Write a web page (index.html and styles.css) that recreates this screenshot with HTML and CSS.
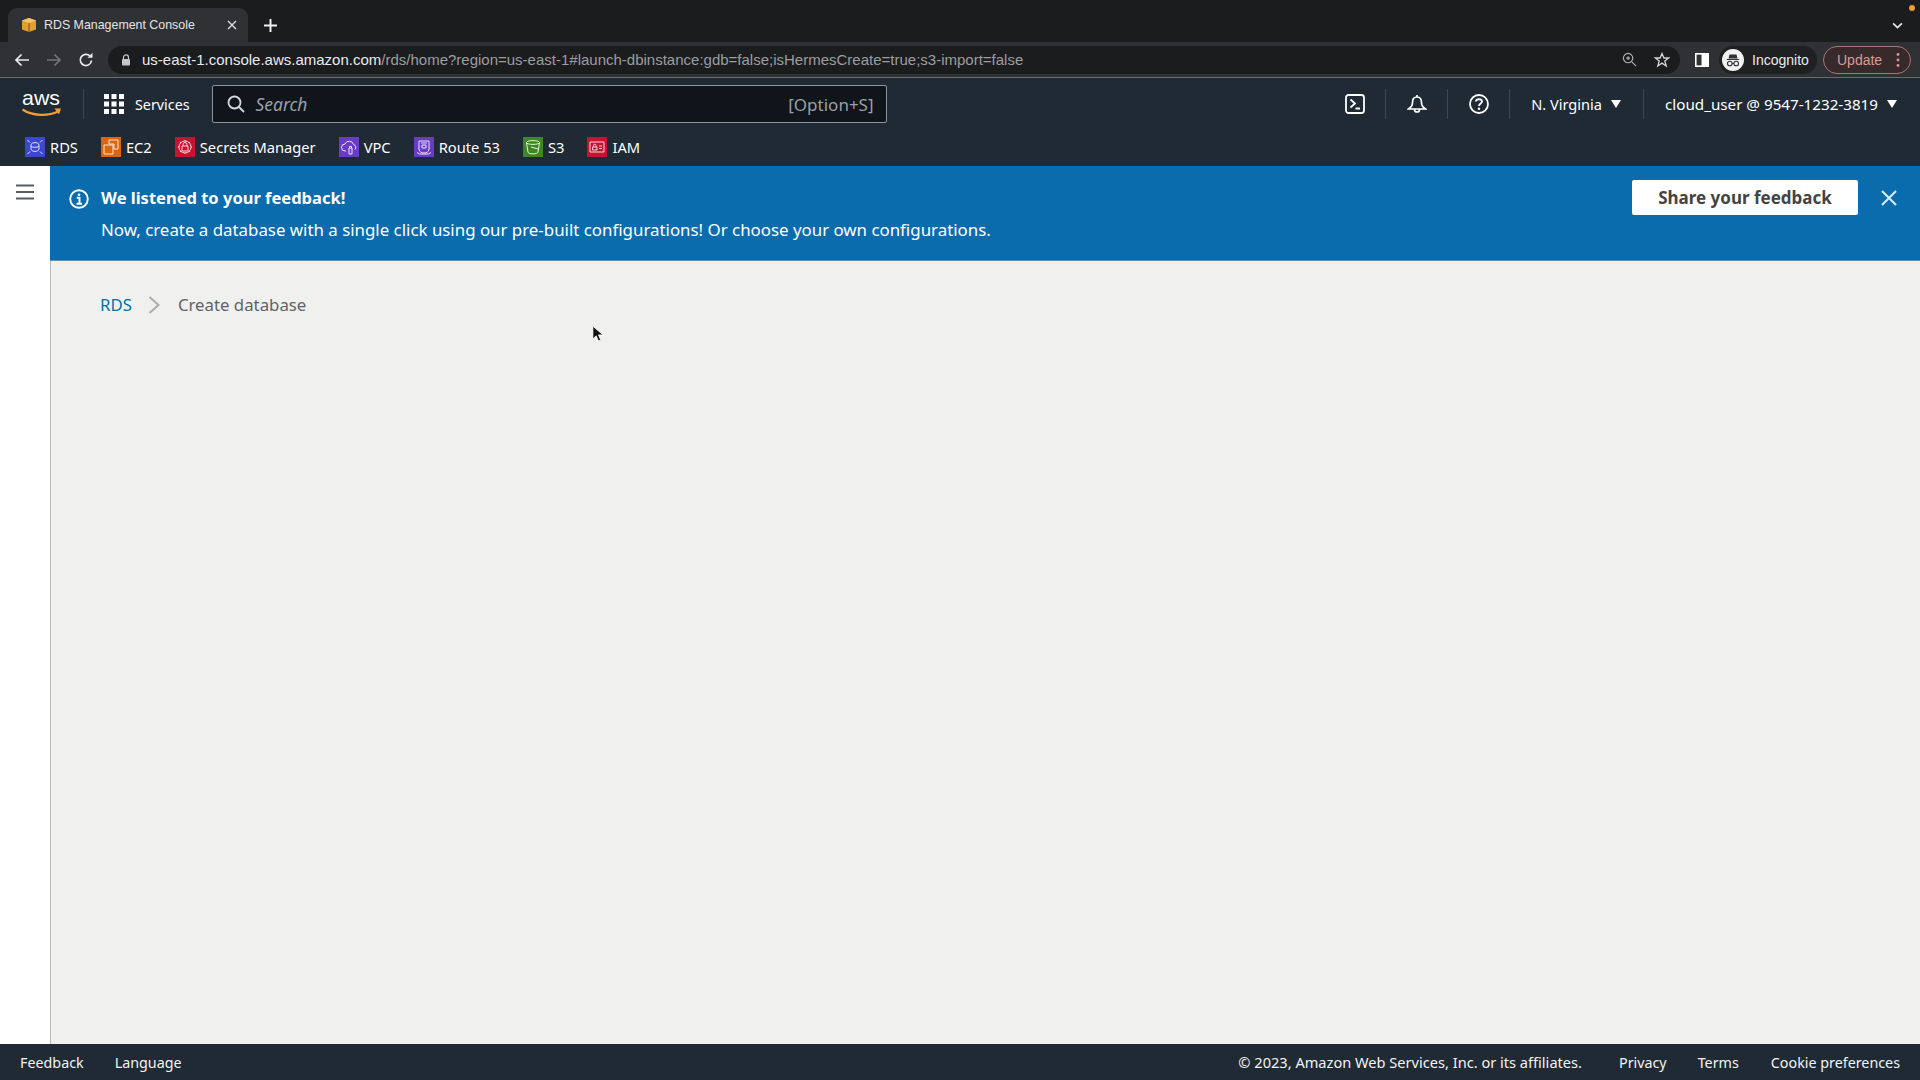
FILE: index.html
```html
<!DOCTYPE html>
<html lang="en">
<head>
<meta charset="utf-8">
<title>RDS Management Console</title>
<link rel="stylesheet" href="styles.css">
</head>
<body>
<div class="page">
  <header class="tabstrip">
    <div class="tab">
      <svg class="favicon" viewBox="0 0 16 16"><path d="M8 1 15 3.500V12.500L8 15 1 12.500V3.500Z" fill="#e0a030"/><path d="M1 3.500 8 6 15 3.500 8 1Z" fill="#f3c46a"/><path d="M8 6V15" stroke="#8a5a14" stroke-width="1.200"/></svg>
      <span class="tab-title">RDS Management Console</span>
      <svg class="tab-close" viewBox="0 0 10 10"><path d="M1 1 9 9M9 1 1 9" stroke="#d8d9db" stroke-width="1.400"/></svg>
    </div>
    <svg class="new-tab" viewBox="0 0 12 12"><path d="M6 0V12M0 6H12" stroke="#f1f1f1" stroke-width="1.800"/></svg>
    <svg class="tab-list" viewBox="0 0 10 6"><path d="M1 1 5 5 9 1" fill="none" stroke="#e8e8e8" stroke-width="1.500"/></svg>
    <span class="notify-dot"></span>
  </header>

  <div class="toolbar">
    <svg class="tb-icon" viewBox="0 0 16 16"><path d="M15 8H2M7.500 2.500 2 8l5.500 5.500" fill="none" stroke="#e8eaed" stroke-width="1.700"/></svg>
    <svg class="tb-icon dim" viewBox="0 0 16 16"><path d="M1 8H14M8.500 2.500 14 8l-5.500 5.500" fill="none" stroke="#73767a" stroke-width="1.700"/></svg>
    <svg class="tb-icon" viewBox="0 0 16 16"><path d="M13.500 8.500A5.600 5.600 0 1 1 11.800 3.900" fill="none" stroke="#e8eaed" stroke-width="1.700"/><path d="M9.500 5.800H14.500V0.800Z" fill="#e8eaed"/></svg>
    <div class="omnibox">
      <svg class="lock" viewBox="0 0 10 12"><path d="M2.500 5V3.400a2.500 2.500 0 0 1 5 0V5" fill="none" stroke="#c4c6c9" stroke-width="1.200"/><rect x="1" y="5" width="8" height="6.500" rx="1" fill="#c4c6c9"/></svg>
      <span class="url"><span class="url-host">us-east-1.console.aws.amazon.com</span>/rds/home?region=us-east-1#launch-dbinstance:gdb=false;isHermesCreate=true;s3-import=false</span>
      <svg class="zoom-icon" viewBox="0 0 16 16"><circle cx="6.500" cy="6.500" r="5" fill="none" stroke="#b4b6b9" stroke-width="1.200"/><path d="M10.500 10.500 15 15M4.500 6.500H8.500M6.500 4.500V8.500" stroke="#b4b6b9" stroke-width="1.200"/></svg>
      <svg class="star-icon" viewBox="0 0 16 16"><path d="M8 1.500 9.900 6H14.700L10.800 9 12.200 14 8 11.100 3.800 14 5.200 9 1.300 6H6.100Z" fill="none" stroke="#d4d5d7" stroke-width="1.300"/></svg>
    </div>
    <svg class="panel-icon" viewBox="0 0 14 14"><rect x="0.800" y="0.800" width="12.400" height="12.400" fill="none" stroke="#fff" stroke-width="1.600"/><rect x="6.500" y="1" width="6.500" height="12" fill="#fff"/></svg>
    <div class="profile">
      <svg class="incognito" viewBox="0 0 22 22"><circle cx="11" cy="11" r="11" fill="#f1f1f1"/><path d="M7.500 5.500H14.500L15.500 9.500H6.500ZM4.800 10H17.200V11H4.800Z" fill="#303134"/><circle cx="7.800" cy="14.500" r="2.300" fill="none" stroke="#303134" stroke-width="1.100"/><circle cx="14.200" cy="14.500" r="2.300" fill="none" stroke="#303134" stroke-width="1.100"/><path d="M10 14.500H12" stroke="#303134"/></svg>
      <span class="profile-name">Incognito</span>
    </div>
    <div class="update">
      <span>Update</span>
      <svg class="update-dots" viewBox="0 0 4 16"><circle cx="2" cy="2.500" r="1.400" fill="#d69a94"/><circle cx="2" cy="8" r="1.400" fill="#d69a94"/><circle cx="2" cy="13.500" r="1.400" fill="#d69a94"/></svg>
    </div>
  </div>

  <nav class="topnav">
    <svg class="aws-logo" viewBox="0 0 40 27">
      <text class="aws-word" x="0" y="13.500" textLength="38" lengthAdjust="spacingAndGlyphs">aws</text>
      <path d="M0.500 18.500C10 25 26 25.500 36 20.500" fill="none" stroke="#f19e38" stroke-width="2.200"/>
      <path d="M32.500 17.500 39 17.500 37 23.500Z" fill="#f19e38"/>
    </svg>
    <span class="nav-sep sep-logo"></span>
    <svg class="grid-icon" viewBox="0 0 20 20">
      <g fill="#fff"><rect width="5" height="5"/><rect x="7.500" width="5" height="5"/><rect x="15" width="5" height="5"/><rect y="7.500" width="5" height="5"/><rect x="7.500" y="7.500" width="5" height="5"/><rect x="15" y="7.500" width="5" height="5"/><rect y="15" width="5" height="5"/><rect x="7.500" y="15" width="5" height="5"/><rect x="15" y="15" width="5" height="5"/></g>
    </svg>
    <span class="nav-text services">Services</span>
    <div class="search">
      <svg class="search-icon" viewBox="0 0 18 18"><circle cx="7.500" cy="7.500" r="6" fill="none" stroke="#d5dbdb" stroke-width="1.800"/><path d="M12 12 17 17" stroke="#d5dbdb" stroke-width="1.800"/></svg>
      <span class="search-ph">Search</span>
      <span class="search-key">[Option+S]</span>
    </div>
    <div class="nav-right">
      <svg class="nav-icon" viewBox="0 0 20 20"><rect x="1" y="1" width="18" height="18" rx="2.500" fill="none" stroke="#fff" stroke-width="1.800"/><path d="M5.500 5.500 10 9.500 5.500 13.500M10.500 14.500H15" fill="none" stroke="#fff" stroke-width="1.800"/></svg>
      <span class="nav-sep"></span>
      <svg class="nav-icon" viewBox="0 0 20 20"><path d="M10 1V3M10 3C6.500 3 5.500 5.500 5.500 8.500 5.500 11.500 4.500 13 1.500 15H18.500C15.500 13 14.500 11.500 14.500 8.500 14.500 5.500 13.500 3 10 3ZM7.500 15.500A2.500 2.500 0 0 0 12.500 15.500" fill="none" stroke="#fff" stroke-width="1.700"/></svg>
      <span class="nav-sep"></span>
      <svg class="nav-icon" viewBox="0 0 20 20"><circle cx="10" cy="10" r="9" fill="none" stroke="#fff" stroke-width="1.800"/><path d="M7 7.500C7 4.500 13 4.500 13 7.500 13 9.500 10 9.500 10 12" fill="none" stroke="#fff" stroke-width="1.800"/><circle cx="10" cy="14.800" r="1.200" fill="#fff"/></svg>
      <span class="nav-sep"></span>
      <span class="nav-text region">N. Virginia</span>
      <span class="caret"></span>
      <span class="nav-sep sep-user"></span>
      <span class="nav-text account">cloud_user @ 9547-1232-3819</span>
      <span class="caret"></span>
    </div>
  </nav>

  <div class="favorites">
    <a class="fav">
      <svg class="fav-icon" viewBox="0 0 20 20"><rect width="20" height="20" fill="#3b48cc"/><path d="M6 7.500A5 5 0 0 1 14 7.500V12.500A5 5 0 0 1 6 12.500ZM6 9.500A5 2 0 0 0 14 9.500M2.500 3 5 5.500M17.500 3 15 5.500M2.500 17 5 14.500M17.500 17 15 14.500" fill="none" stroke="#dfe3ff" stroke-width="1"/></svg>
      RDS
    </a>
    <a class="fav">
      <svg class="fav-icon" viewBox="0 0 20 20"><rect width="20" height="20" fill="#d86613"/><path d="M8 3H17V12H13V7H8ZM3 8H12V17H3Z" fill="none" stroke="#fbe3cf" stroke-width="1"/></svg>
      EC2
    </a>
    <a class="fav">
      <svg class="fav-icon" viewBox="0 0 20 20"><rect width="20" height="20" fill="#c7132f"/><circle cx="10" cy="10" r="6" fill="none" stroke="#f8d4da" stroke-width="1"/><path d="M8 9V7.500A2 2 0 0 1 12 7.500V9M7 9H13V14H7ZM3 10H4M16 10H17M10 3V4M10 16V17M5 5 6 6M14 14 15 15M15 5 14 6M5 15 6 14" fill="none" stroke="#f8d4da" stroke-width="1"/></svg>
      Secrets Manager
    </a>
    <a class="fav">
      <svg class="fav-icon" viewBox="0 0 20 20"><rect width="20" height="20" fill="#693cc5"/><path d="M7 14H6A3.500 3.500 0 0 1 6 7 4.500 4.500 0 0 1 14.500 7.500 3 3 0 0 1 16 12.500M10 11H13V17H10ZM10.500 11V9.500H12.500V11" fill="none" stroke="#ece4ff" stroke-width="1"/></svg>
      VPC
    </a>
    <a class="fav">
      <svg class="fav-icon" viewBox="0 0 20 20"><rect width="20" height="20" fill="#693cc5"/><path d="M5 4H15V12C15 15 12 16 10 16 8 16 5 15 5 12ZM3 15.500 5.500 17H14.500L17 15.500M8 8H12V11H8ZM7 6H13" fill="none" stroke="#ece4ff" stroke-width="1"/></svg>
      Route 53
    </a>
    <a class="fav">
      <svg class="fav-icon" viewBox="0 0 20 20"><rect width="20" height="20" fill="#3f8624"/><path d="M3.500 5.500C3.500 3 16.500 3 16.500 5.500L15 15C15 17.500 5 17.500 5 15ZM3.500 5.500C3.500 8 16.500 8 16.500 5.500M8 10 15 12" fill="none" stroke="#e4f3dc" stroke-width="1"/></svg>
      S3
    </a>
    <a class="fav">
      <svg class="fav-icon" viewBox="0 0 20 20"><rect width="20" height="20" fill="#c7132f"/><path d="M3 5H17V15H3ZM5.500 13V10H10V13ZM6.500 10V8.500A1.200 1.200 0 0 1 9 8.500V10M12 9H15M12 11.500H15" fill="none" stroke="#f8d4da" stroke-width="1"/></svg>
      IAM
    </a>
  </div>

  <div class="main">
    <aside class="sidebar">
      <svg class="hamburger" viewBox="0 0 18 16"><path d="M0 1.500H18M0 8H18M0 14.500H18" stroke="#545b64" stroke-width="2.200"/></svg>
    </aside>
    <div class="content">
      <section class="banner">
        <svg class="info-icon" viewBox="0 0 20 20"><circle cx="10" cy="10" r="8.800" fill="none" stroke="#fff" stroke-width="1.900"/><circle cx="10" cy="5.800" r="1.300" fill="#fff"/><path d="M7.800 8.800H10.500V14.500M7.500 14.800H13" fill="none" stroke="#fff" stroke-width="1.900"/></svg>
        <div class="banner-text">
          <div class="banner-title">We listened to your feedback!</div>
          <div class="banner-body">Now, create a database with a single click using our pre-built configurations! Or choose your own configurations.</div>
        </div>
        <button class="share-btn">Share your feedback</button>
        <svg class="banner-close" viewBox="0 0 16 16"><path d="M1 1 15 15M15 1 1 15" stroke="#d3ebf7" stroke-width="2.200"/></svg>
      </section>
      <div class="canvas">
        <div class="breadcrumbs">
          <a class="crumb-link">RDS</a>
          <svg class="crumb-chevron" viewBox="0 0 12 18"><path d="M1.500 1 10.500 9 1.500 17" fill="none" stroke="#a9adad" stroke-width="2"/></svg>
          <span class="crumb-current">Create database</span>
        </div>
      </div>
    </div>
  </div>

  <footer class="footer">
    <span class="foot-link first">Feedback</span>
    <span class="foot-link lang">Language</span>
    <span class="foot-copy">© 2023, Amazon Web Services, Inc. or its affiliates.</span>
    <span class="foot-link privacy">Privacy</span>
    <span class="foot-link terms">Terms</span>
    <span class="foot-link cookie">Cookie preferences</span>
  </footer>

  <svg class="cursor" viewBox="0 0 12 18"><path d="M1 1V15L4.500 11.500 7 17 9.500 16 7 10.500H12Z" fill="#111" stroke="#fff" stroke-width="0.800"/></svg>
</div>
</body>
</html>
```
FILE: styles.css
```css
* { box-sizing: border-box; }
html, body { margin: 0; height: 100%; overflow: hidden; }
body { font-family: "Noto Sans", "Open Sans", sans-serif; }
svg { display: block; flex: none; }

.page { width: 1920px; height: 1080px; display: flex; flex-direction: column; position: relative; background: #f0f1ee; }

/* browser chrome */
.tabstrip { height: 42px; flex: none; background: #1b1c1e; display: flex; align-items: flex-start; padding: 8px 0 0 8px; position: relative; font-family: "Liberation Sans", Arial, sans-serif; }
.tab { width: 240px; height: 34px; background: #303134; border-radius: 9px 9px 0 0; display: flex; align-items: center; padding-left: 13px; }
.favicon { width: 16px; height: 16px; }
.tab-title { margin-left: 7px; font-size: 12.4px; color: #e3e4e6; white-space: nowrap; width: 180px; }
.tab-close { width: 10px; height: 10px; margin-left: 3px; }
.new-tab { width: 13px; height: 13px; margin: 11px 0 0 16px; }
.tab-list { width: 11px; height: 7px; position: absolute; right: 17px; top: 22px; }
.notify-dot { position: absolute; right: 5px; top: 5px; width: 6px; height: 6px; border-radius: 50%; background: #ea9a3e; }

.toolbar { height: 36px; flex: none; background: #303134; border-bottom: 1px solid #6a6c6f; display: flex; align-items: center; padding: 0 8px 0 14px; font-family: "Liberation Sans", Arial, sans-serif; }
.tb-icon { width: 16px; height: 16px; margin-right: 16px; }
.tb-icon:nth-child(3) { margin-right: 14px; }
.omnibox { width: 1572px; height: 28px; flex: none; border-radius: 14px; background: #1b1c1e; display: flex; align-items: center; padding-left: 13px; }
.lock { width: 10px; height: 12px; }
.url { margin-left: 11px; font-size: 15px; color: #9b9da0; white-space: nowrap; flex: 1; }
.url-host { color: #e8eaed; }
.zoom-icon { width: 15px; height: 15px; margin-right: 17px; }
.star-icon { width: 16px; height: 16px; margin-right: 10px; }
.panel-icon { width: 14px; height: 14px; margin-left: 15px; }
.profile { width: 98px; height: 28px; border-radius: 14px; background: #1f2022; margin-left: 10px; display: flex; align-items: center; padding-left: 3px; }
.incognito { width: 22px; height: 22px; }
.profile-name { margin-left: 8px; font-size: 14px; color: #e8eaed; }
.update { width: 88px; height: 28px; border-radius: 14px; border: 1px solid #a4787a; background: #38292b; margin-left: 6px; display: flex; align-items: center; padding-left: 13px; font-size: 14px; color: #dc9c94; }
.update-dots { width: 4px; height: 16px; margin-left: 14px; }

/* console nav */
.topnav { height: 52px; flex: none; background: #1f2a35; display: flex; align-items: center; padding-left: 22px; color: #fff; }
.aws-logo { width: 40px; height: 27px; overflow: visible; }
.aws-word { font-family: "Liberation Sans", Arial, sans-serif; font-size: 21px; fill: #fff; }
.nav-sep { width: 1px; height: 30px; background: #3a4652; }
.sep-logo { margin-left: 21px; }
.grid-icon { width: 20px; height: 20px; margin-left: 20px; }
.nav-text { font-size: 14.3px; white-space: nowrap; }
.services { margin-left: 11px; }
.search { width: 675px; height: 38px; margin-left: 22px; flex: none; background: #0f151a; border: 1px solid #8d9398; border-radius: 2px; display: flex; align-items: center; padding: 0 12px 0 14px; }
.search-icon { width: 18px; height: 18px; }
.search-ph { margin-left: 11px; font-style: italic; font-size: 17.4px; color: #9aa0a5; }
.search-key { margin-left: auto; font-size: 17px; color: #9aa0a5; }
.nav-right { margin-left: auto; display: flex; align-items: center; padding-right: 23px; }
.nav-icon { width: 20px; height: 20px; margin: 0 20px 0 21px; }
.nav-right .nav-sep + .region { margin-left: 21px; }
.region { font-size: 14.6px; }
.account { font-size: 15.2px; }
.caret { width: 0; height: 0; margin-left: 9px; border-left: 5px solid transparent; border-right: 5px solid transparent; border-top: 8px solid #fff; }
.sep-user { margin: 0 21px 0 22px; }

.favorites { height: 36px; flex: none; background: #1f2a35; display: flex; align-items: center; padding: 0 0 3px 25px; gap: 23px; }
.fav { display: flex; align-items: center; gap: 5px; font-size: 14.7px; color: #fff; white-space: nowrap; }
.fav-icon { width: 20px; height: 20px; }

/* page */
.main { flex: 1; display: flex; min-height: 0; }
.sidebar { width: 50px; flex: none; background: #fff; padding: 18px 0 0 16px; }
.hamburger { width: 18px; height: 16px; }
.content { flex: 1; min-width: 0; display: flex; flex-direction: column; }
.banner { height: 95px; flex: none; background: #0a6cad; border-bottom: 1px solid #5b93bb; display: flex; align-items: flex-start; color: #fff; padding: 14px 21px 0 19px; }
.info-icon { width: 20px; height: 20px; margin-top: 9px; }
.banner-text { margin-left: 12px; flex: 1; }
.banner-title { font-weight: 700; font-size: 16.5px; line-height: 22px; margin-top: 7px; }
.banner-body { font-size: 16.87px; line-height: 22px; margin-top: 10px; }
.share-btn { width: 226px; height: 35px; border: 0; border-radius: 2px; background: #fff; color: #444; font: 700 17px "Noto Sans", sans-serif; }
.banner-close { width: 16px; height: 16px; margin: 10px 2px 0 23px; }
.canvas { flex: 1; border-left: 1px solid #b9b9b9; }
.breadcrumbs { display: flex; align-items: center; padding: 32px 0 0 49px; font-size: 16.8px; }
.crumb-link { color: #0073a6; }
.crumb-chevron { width: 12px; height: 18px; margin: 0 18px 0 16px; }
.crumb-current { color: #5f6368; }

.footer { height: 36px; flex: none; background: #1f2a35; color: #f2f3f3; display: flex; align-items: center; font-size: 14.3px; padding: 0 20px; white-space: nowrap; }
.lang { margin-left: 31px; }
.foot-copy { margin-left: auto; font-size: 14.6px; }
.privacy { margin-left: 37px; }
.terms { margin-left: 31px; }
.cookie { margin-left: 32px; }

.cursor { position: absolute; left: 592px; top: 325px; width: 11px; height: 17px; }
```
